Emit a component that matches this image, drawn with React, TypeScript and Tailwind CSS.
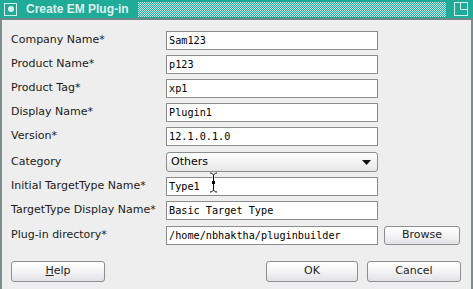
const labelFont = { fontFamily: '"DejaVu Sans", sans-serif' };
const fieldFont = { fontFamily: '"DejaVu Sans Mono", monospace' };

function Field({ value, className = "" }: { value: string; className?: string }) {
  return (
    <div
      className={`relative w-[212px] h-[19px] bg-white border border-[#8c8c8c] pl-[2px] text-[10.2px] leading-[17px] text-black ${className}`}
      style={fieldFont}
    >
      {value}
    </div>
  );
}

function Btn({ children, className = "" }: { children: React.ReactNode; className?: string }) {
  return (
    <div
      className={`flex items-center justify-center rounded-[3px] border border-[#8e8e8e] bg-gradient-to-b from-white via-[#f4f4f6] to-[#e2e2e6] text-[11px] text-[#222] ${className}`}
      style={labelFont}
    >
      {children}
    </div>
  );
}

const rows = [
  { label: "Company Name*", value: "Sam123" },
  { label: "Product Name*", value: "p123" },
  { label: "Product Tag*", value: "xp1" },
  { label: "Display Name*", value: "Plugin1" },
  { label: "Version*", value: "12.1.0.1.0" },
];

export default function App() {
  return (
    <div className="w-[473px] h-[289px] bg-[#eeeeee] flex flex-col overflow-hidden" style={labelFont}>
      {/* title bar */}
      <div className="h-[20px] shrink-0 bg-[#20aa98] border-b-2 border-[#6f8989] flex items-center">
        <div className="ml-[4px] w-[13px] h-[13px] border border-[#d6efeb] flex items-center justify-center">
          <div className="w-[6px] h-[6px] rounded-full bg-[#d6efeb]" />
        </div>
        <span
          className="ml-[9px] text-[12px] font-bold text-[#dcf1ed] leading-none"
          style={{ fontFamily: '"Liberation Sans", sans-serif' }}
        >
          Create EM Plug-in
        </span>
        <div className="ml-[9px] w-[308px] h-[15px] bg-[repeating-conic-gradient(#20aa98_0_25%,#cdece7_0_50%)] bg-[length:2px_2px]" />
        <svg className="ml-[8px]" width="14" height="14" viewBox="0 0 14 14" fill="none" stroke="#d6efeb">
          <rect x="0.5" y="0.5" width="13" height="13" />
          <path d="M6.5 0.5V7.5H13.5" />
        </svg>
      </div>

      {/* body */}
      <div className="flex-1 border-l-2 border-r-2 border-[#7b8d8d] pl-[9px] pt-[11px] flex flex-col">
        <div className="flex flex-col gap-[5px]">
          {rows.map((r) => (
            <div key={r.label} className="flex items-center">
              <span className="w-[155px] text-[11px] text-[#1a1a1a]">{r.label}</span>
              <Field value={r.value} />
            </div>
          ))}
          <div className="flex items-center mt-px">
            <span className="w-[155px] text-[11px] text-[#1a1a1a]">Category</span>
            <div className="w-[212px] h-[20px] rounded-[3px] border border-[#8c8c8c] bg-gradient-to-b from-white to-[#e6e6e8] flex items-center justify-between pl-[4px] pr-[6px]">
              <span className="text-[11px] text-black">Others</span>
              <svg width="9" height="5" viewBox="0 0 9 5">
                <path d="M0 0H9L4.5 5Z" fill="#111" />
              </svg>
            </div>
          </div>
          <div className="flex items-center">
            <span className="w-[155px] text-[11px] text-[#1a1a1a]">Initial TargetType Name*</span>
            <Field value="Type1" />
          </div>
          <div className="flex items-center">
            <span className="w-[155px] text-[11px] text-[#1a1a1a]">TargetType Display Name*</span>
            <Field value="Basic Target Type" />
          </div>
          <div className="flex items-center mt-px">
            <span className="w-[155px] text-[11px] text-[#1a1a1a]">Plug-in directory*</span>
            <Field value="/home/nbhaktha/pluginbuilder" />
            <Btn className="ml-[6px] w-[76px] h-[19px]">Browse</Btn>
          </div>
        </div>

        <div className="flex items-center mt-[16px]">
          <Btn className="w-[94px] h-[21px]">
            <span className="underline">H</span>elp
          </Btn>
          <Btn className="ml-[161px] w-[92px] h-[21px] border-[#6d82b6]">OK</Btn>
          <Btn className="ml-[9px] w-[94px] h-[21px]">Cancel</Btn>
        </div>
      </div>

      {/* mouse I-beam cursor over the Type1 field */}
      <svg className="absolute left-[209px] top-[172px]" width="9" height="21" viewBox="0 0 9 21" fill="none">
        <path d="M1 1C3 1 4 2 4.5 3.5C5 2 6 1 8 1" stroke="#fff" strokeWidth="2.2" />
        <path d="M1 20C3 20 4 19 4.5 17.5C5 19 6 20 8 20" stroke="#fff" strokeWidth="2.2" />
        <path d="M4.5 3V18" stroke="#fff" strokeWidth="2.2" />
        <path d="M1 1C3 1 4 2 4.5 3.5C5 2 6 1 8 1" stroke="#000" strokeWidth="1" />
        <path d="M1 20C3 20 4 19 4.5 17.5C5 19 6 20 8 20" stroke="#000" strokeWidth="1" />
        <path d="M4.5 3.5V17.5" stroke="#000" strokeWidth="1" />
        <rect x="3" y="9" width="3" height="3" fill="#000" />
      </svg>
    </div>
  );
}
